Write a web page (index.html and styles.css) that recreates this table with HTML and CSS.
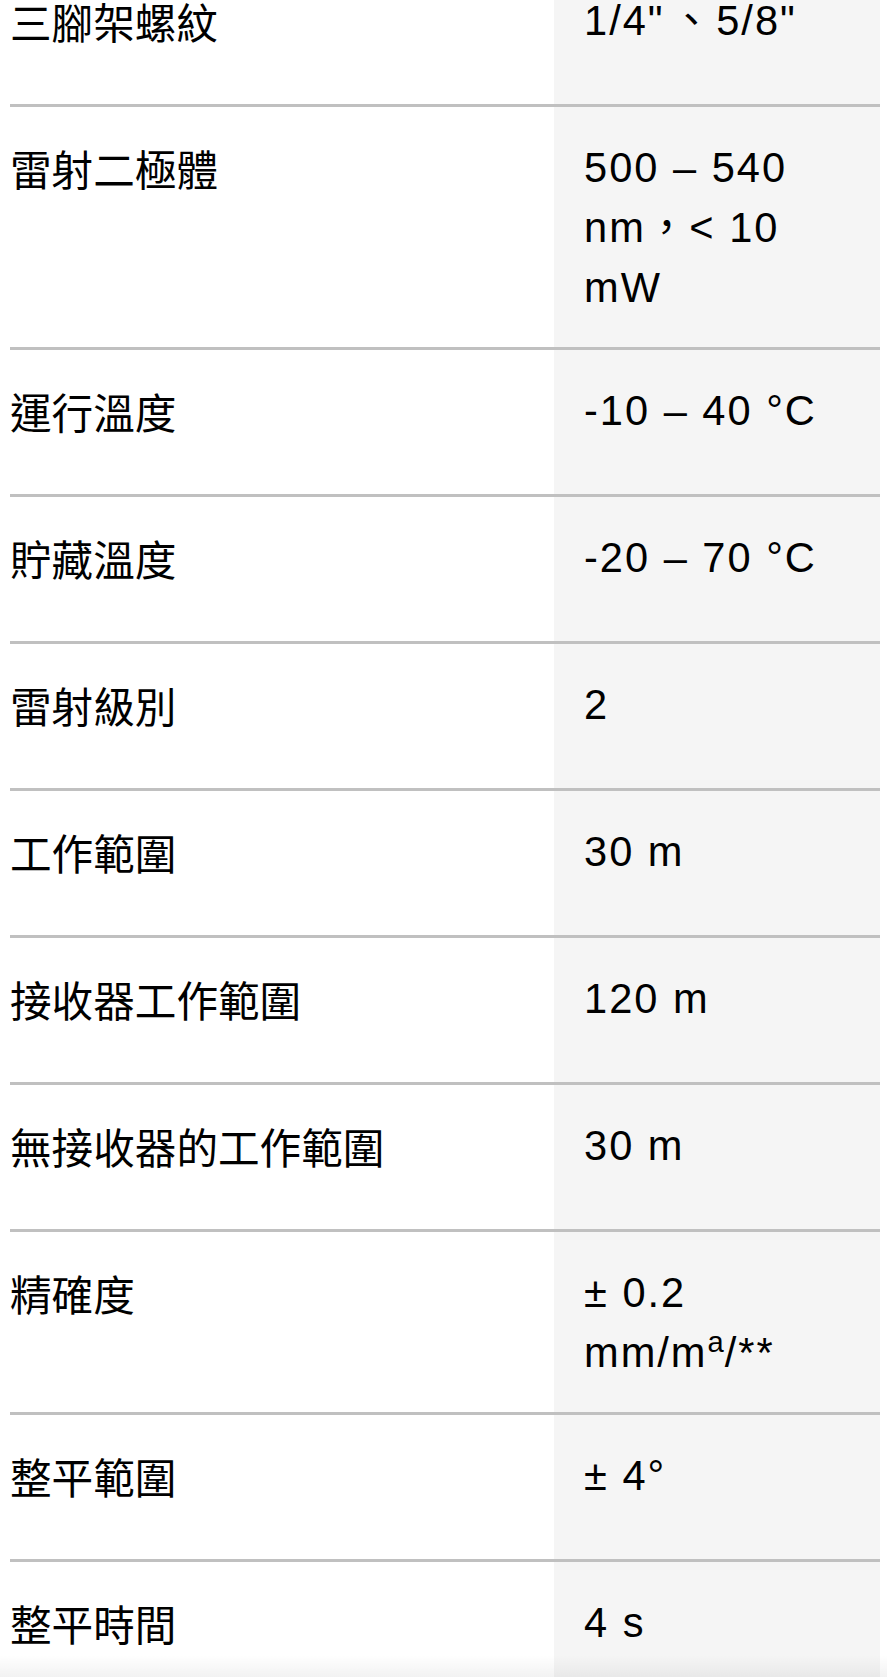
FILE: index.html
```html
<!DOCTYPE html>
<html lang="zh-Hant">
<head>
<meta charset="utf-8">
<title>技術規格</title>
<link rel="stylesheet" href="styles.css">
</head>
<body>
<div class="specs">
  <div class="row"><div class="label">三腳架螺紋</div><div class="value">1/4"<span class="mark">、</span>5/8"</div></div>
  <div class="row"><div class="label">雷射二極體</div><div class="value">500 – 540 nm，&lt; 10 mW</div></div>
  <div class="row"><div class="label">運行溫度</div><div class="value">-10 – 40 °C</div></div>
  <div class="row"><div class="label">貯藏溫度</div><div class="value">-20 – 70 °C</div></div>
  <div class="row"><div class="label">雷射級別</div><div class="value">2</div></div>
  <div class="row"><div class="label">工作範圍</div><div class="value">30 m</div></div>
  <div class="row"><div class="label">接收器工作範圍</div><div class="value">120 m</div></div>
  <div class="row"><div class="label">無接收器的工作範圍</div><div class="value">30 m</div></div>
  <div class="row"><div class="label">精確度</div><div class="value">± 0.2 mm/m<span class="sup">a</span>/**</div></div>
  <div class="row"><div class="label">整平範圍</div><div class="value">± 4°</div></div>
  <div class="row"><div class="label">整平時間</div><div class="value">4 s</div></div>
</div>
<div class="bottom-fade"></div>
</body>
</html>
```
FILE: styles.css
```css
html, body {
  margin: 0;
  padding: 0;
  background: #ffffff;
  overflow: hidden;
}

body {
  height: 1677px;
  position: relative;
  color: #000000;
  font-family: "Liberation Sans", "Noto Sans CJK TC", sans-serif;
}

.specs {
  margin: -40px 0 0 10px;
  width: 870px;
}

.row {
  display: grid;
  grid-template-columns: 544px 326px;
  border-bottom: 3px solid #c0c0c0;
}

.label,
.value {
  box-sizing: border-box;
  min-height: 144px;
  padding-top: 31px;
  padding-bottom: 29px;
  font-size: 41.6px;
  line-height: 60px;
}

.label {
  font-family: "Noto Sans CJK TC", sans-serif;
  padding-right: 20px;
}

.value {
  background: #f5f5f5;
  padding-left: 30px;
  padding-right: 50px;
  letter-spacing: 2px;
  font-family: "Liberation Sans", "Noto Sans CJK TC", sans-serif;
}

.mark {
  margin: 0 4px 0 6px;
  letter-spacing: 0;
}

.sup {
  font-size: 0.7em;
  vertical-align: 0.5em;
  line-height: 0;
  letter-spacing: 1px;
}

.bottom-fade {
  position: absolute;
  left: 0;
  right: 0;
  bottom: 0;
  height: 22px;
  background: linear-gradient(to bottom, rgba(0, 0, 0, 0), rgba(0, 0, 0, 0.05));
}
```
